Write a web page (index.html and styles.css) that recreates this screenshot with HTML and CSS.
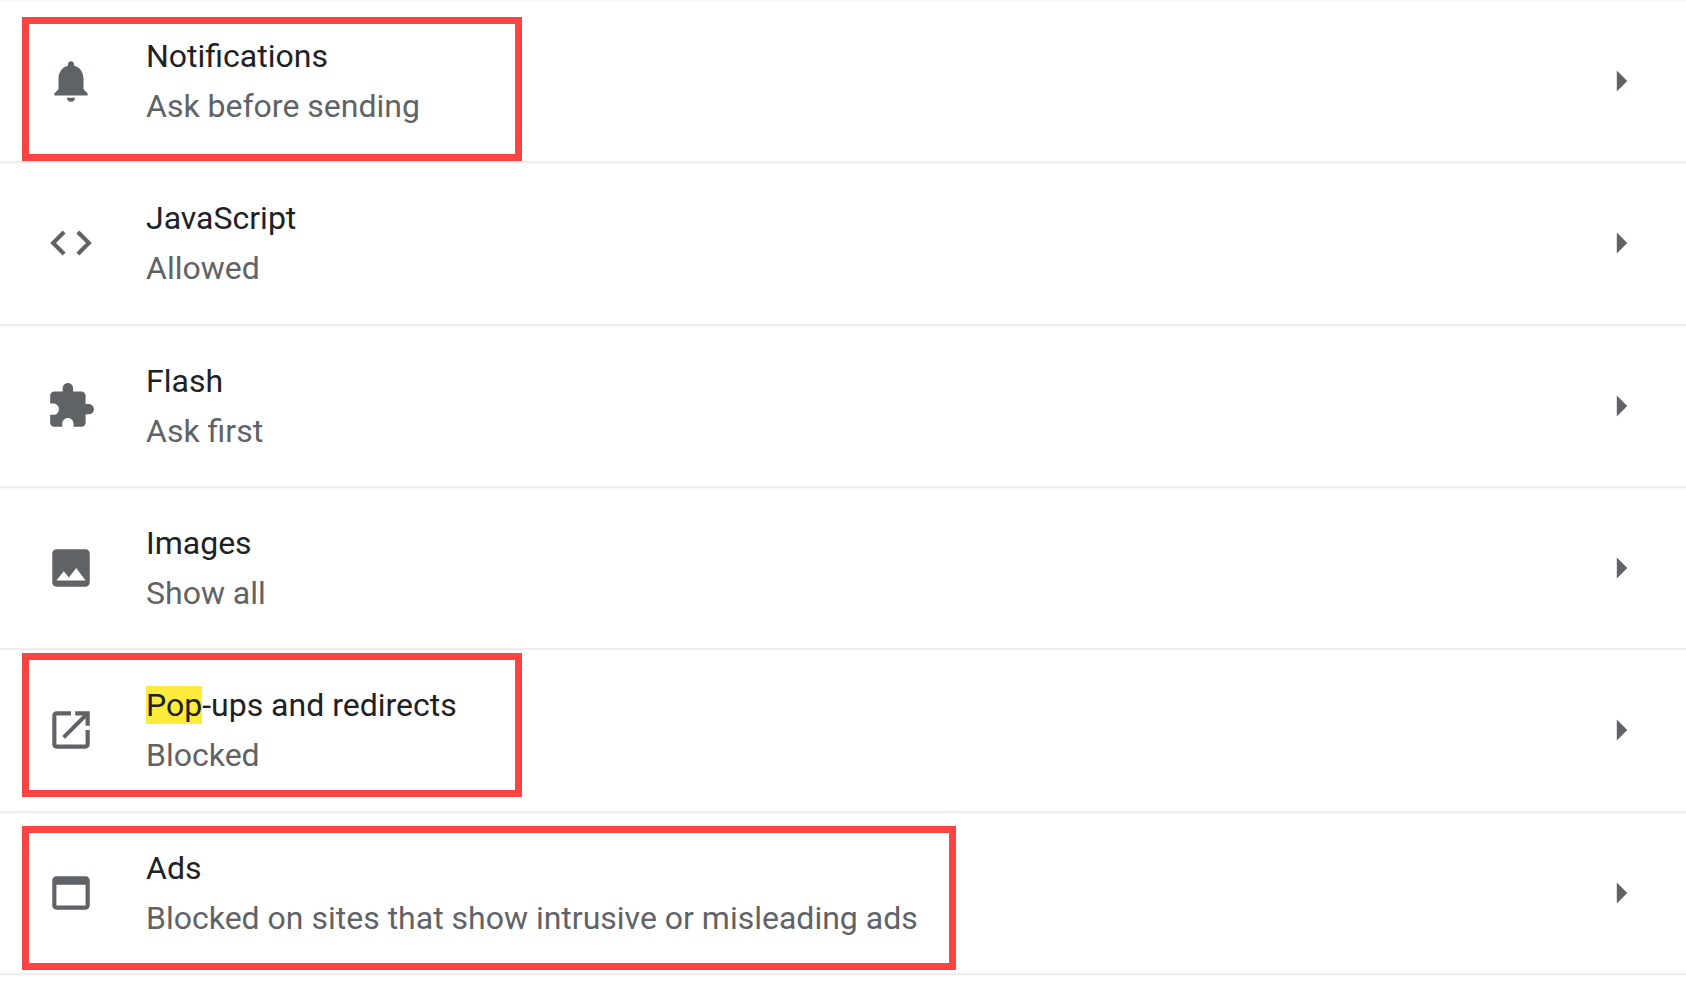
FILE: index.html
```html
<!DOCTYPE html>
<html lang="en">
<head>
  <meta charset="UTF-8">
  <title>Site Settings</title>
  <meta name="viewport" content="width=device-width, initial-scale=1">
  <link rel="stylesheet" href="styles.css">
</head>
<body>
  <ul class="settings">
    <li class="row">
      <svg class="icon" viewBox="0 0 24 24" aria-hidden="true"><path d="M12 22c1.1 0 2-.9 2-2h-4c0 1.1.9 2 2 2zm6-6v-5c0-3.07-1.64-5.64-4.5-6.32V4c0-.83-.67-1.5-1.5-1.5s-1.5.67-1.5 1.5v.68C7.63 5.36 6 7.92 6 11v5l-2 2v1h16v-1l-2-2z"/></svg>
      <div class="text">
        <div class="title" id="notifications">Notifications</div>
        <div class="status">Ask before sending</div>
      </div>
      <button class="arrow" aria-labelledby="notifications"><svg class="icon" viewBox="0 0 24 24"><path d="M10 7l5 5-5 5z"/></svg></button>
      <div class="callout callout-notifications"></div>
    </li>
    <li class="row">
      <svg class="icon" viewBox="0 0 24 24" aria-hidden="true"><path d="M9.4 16.6L4.8 12l4.6-4.6L8 6l-6 6 6 6 1.4-1.4zm5.2 0l4.6-4.6-4.6-4.6L16 6l6 6-6 6-1.4-1.4z"/></svg>
      <div class="text">
        <div class="title" id="javascript">JavaScript</div>
        <div class="status">Allowed</div>
      </div>
      <button class="arrow" aria-labelledby="javascript"><svg class="icon" viewBox="0 0 24 24"><path d="M10 7l5 5-5 5z"/></svg></button>
    </li>
    <li class="row">
      <svg class="icon" viewBox="0 0 24 24" aria-hidden="true"><path d="M20.5 11H19V7c0-1.1-.9-2-2-2h-4V3.5C13 2.12 11.88 1 10.5 1S8 2.12 8 3.5V5H4c-1.1 0-1.99.9-1.99 2v3.8H3.5c1.49 0 2.7 1.21 2.7 2.7s-1.21 2.7-2.7 2.7H2V20c0 1.1.9 2 2 2h3.8v-1.5c0-1.49 1.21-2.7 2.7-2.7 1.49 0 2.7 1.21 2.7 2.7V22H17c1.1 0 2-.9 2-2v-4h1.5c1.38 0 2.5-1.12 2.5-2.5S21.88 11 20.5 11z"/></svg>
      <div class="text">
        <div class="title" id="flash">Flash</div>
        <div class="status">Ask first</div>
      </div>
      <button class="arrow" aria-labelledby="flash"><svg class="icon" viewBox="0 0 24 24"><path d="M10 7l5 5-5 5z"/></svg></button>
    </li>
    <li class="row">
      <svg class="icon" viewBox="0 0 24 24" aria-hidden="true"><path d="M21 19V5c0-1.1-.9-2-2-2H5c-1.1 0-2 .9-2 2v14c0 1.1.9 2 2 2h14c1.1 0 2-.9 2-2zM8.5 13.5l2.5 3.01L14.5 12l4.5 6H5l3.5-4.5z"/></svg>
      <div class="text">
        <div class="title" id="images">Images</div>
        <div class="status">Show all</div>
      </div>
      <button class="arrow" aria-labelledby="images"><svg class="icon" viewBox="0 0 24 24"><path d="M10 7l5 5-5 5z"/></svg></button>
    </li>
    <li class="row">
      <svg class="icon" viewBox="0 0 24 24" aria-hidden="true"><path d="M19 19H5V5h7V3H5c-1.11 0-2 .9-2 2v14c0 1.1.89 2 2 2h14c1.1 0 2-.9 2-2v-7h-2v7zM14 3v2h3.59l-9.83 9.83 1.41 1.41L19 6.41V10h2V3h-7z"/></svg>
      <div class="text">
        <div class="title" id="popups"><mark>Pop</mark>-ups and redirects</div>
        <div class="status">Blocked</div>
      </div>
      <button class="arrow" aria-labelledby="popups"><svg class="icon" viewBox="0 0 24 24"><path d="M10 7l5 5-5 5z"/></svg></button>
      <div class="callout callout-popups"></div>
    </li>
    <li class="row">
      <svg class="icon" viewBox="0 0 24 24" aria-hidden="true"><path d="M19 4H5c-1.11 0-2 .9-2 2v12c0 1.1.89 2 2 2h14c1.1 0 2-.9 2-2V6c0-1.1-.89-2-2-2zm0 14H5V8h14v10z"/></svg>
      <div class="text">
        <div class="title" id="ads">Ads</div>
        <div class="status">Blocked on sites that show intrusive or misleading ads</div>
      </div>
      <button class="arrow" aria-labelledby="ads"><svg class="icon" viewBox="0 0 24 24"><path d="M10 7l5 5-5 5z"/></svg></button>
      <div class="callout callout-ads"></div>
    </li>
  </ul>
</body>
</html>
```

FILE: styles.css
```css
* {
  box-sizing: border-box;
}
body {
  margin: 0;
  padding-bottom: 12px;
  min-height: 100vh;
  display: flex;
  background: #fff;
  color: #202124;
  font-family: Roboto, "Liberation Sans", sans-serif;
  font-size: 32px;
  line-height: 50px;
}
.settings {
  flex: 1;
  display: flex;
  flex-direction: column;
  margin: 0;
  padding: 0;
  list-style: none;
  border-top: 1px solid #f5f5f5;
}
.row {
  position: relative;
  flex: 1;
  display: flex;
  align-items: center;
  gap: 50px;
  padding: 0 40px 0 46px;
  border-bottom: 2px solid #eee;
  box-shadow: 0 1px #f9f9f9;
}
.icon {
  display: block;
  flex: none;
  width: 50px;
  height: 50px;
  fill: #5f6368;
}
.text {
  flex: 1;
}
.status {
  color: #5f6368;
}
mark {
  background: #ffeb3b;
  color: inherit;
}
.arrow {
  padding: 0;
  background: none;
  border: none;
  cursor: pointer;
}

/* red boxes drawn over the rows */
.callout {
  position: absolute;
  left: 22px;
  width: 500px;
  height: 144px;
  border: 7px solid #fe4343;
  pointer-events: none;
}
.callout-notifications {
  top: 16px;
}
.callout-popups {
  top: 3px;
}
.callout-ads {
  bottom: 3px;
  width: 934px;
}
```
